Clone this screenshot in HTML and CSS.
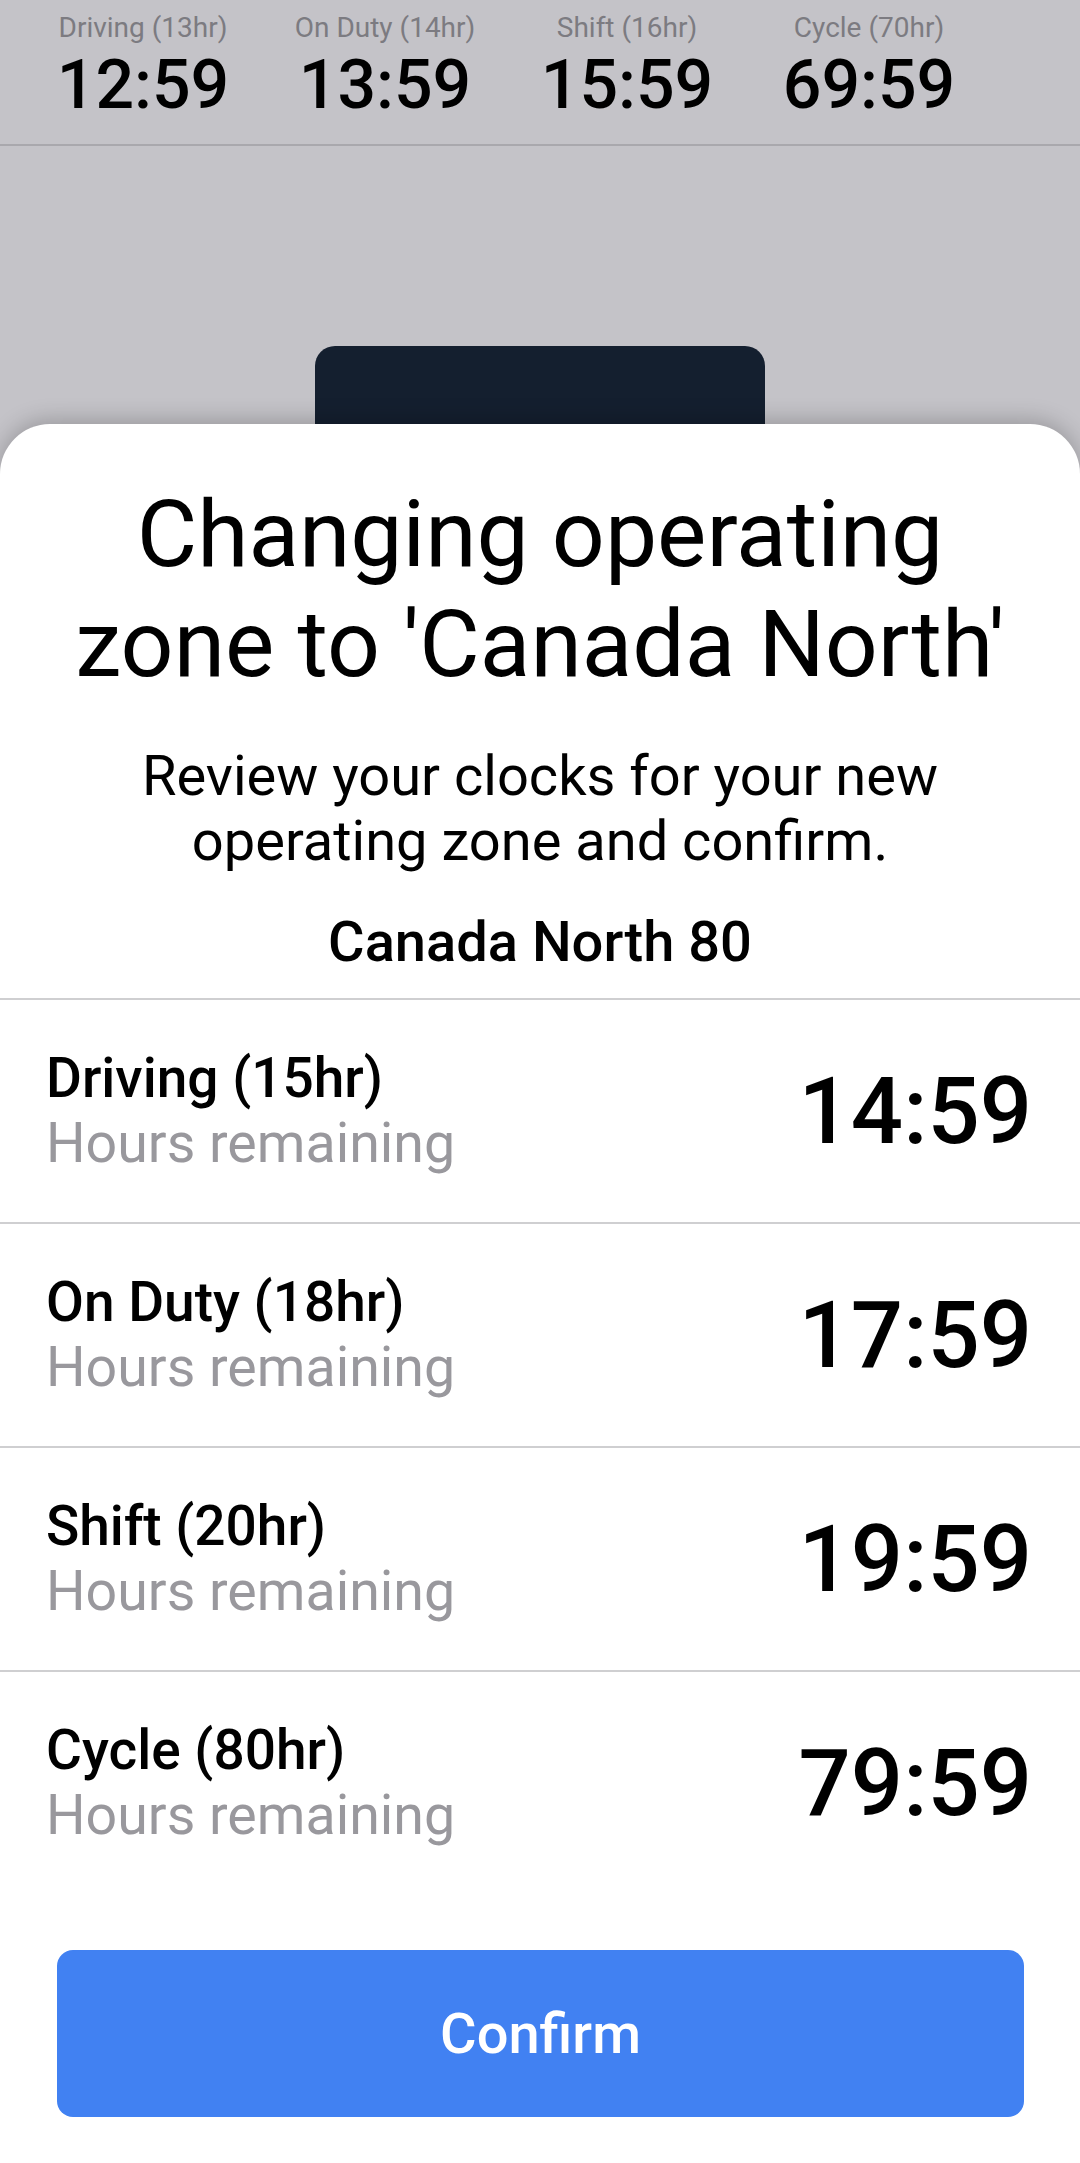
FILE: index.html
```html
<!DOCTYPE html>
<html>
<head>
<meta charset="utf-8">
<link rel="stylesheet" href="styles.css">
</head>
<body>
<div class="page">
  <header class="clocks">
    <div class="clock"><div class="clock-label">Driving (13hr)</div><div class="clock-value">12:59</div></div>
    <div class="clock"><div class="clock-label">On Duty (14hr)</div><div class="clock-value">13:59</div></div>
    <div class="clock"><div class="clock-label">Shift (16hr)</div><div class="clock-value">15:59</div></div>
    <div class="clock"><div class="clock-label">Cycle (70hr)</div><div class="clock-value">69:59</div></div>
  </header>
  <div class="behind">
    <div class="dark-btn"></div>
  </div>
</div>
<section class="sheet">
  <h1 class="title">Changing operating zone to 'Canada North'</h1>
  <p class="subtitle">Review your clocks for your new operating zone and confirm.</p>
  <div class="zone">Canada North 80</div>
  <div class="rows">
    <div class="row">
      <div class="row-text"><div class="row-label">Driving (15hr)</div><div class="row-sub">Hours remaining</div></div>
      <div class="row-value">14:59</div>
    </div>
    <div class="row">
      <div class="row-text"><div class="row-label">On Duty (18hr)</div><div class="row-sub">Hours remaining</div></div>
      <div class="row-value">17:59</div>
    </div>
    <div class="row">
      <div class="row-text"><div class="row-label">Shift (20hr)</div><div class="row-sub">Hours remaining</div></div>
      <div class="row-value">19:59</div>
    </div>
    <div class="row">
      <div class="row-text"><div class="row-label">Cycle (80hr)</div><div class="row-sub">Hours remaining</div></div>
      <div class="row-value">79:59</div>
    </div>
  </div>
  <div class="actions">
    <button class="confirm">Confirm</button>
  </div>
</section>
</body>
</html>
```

FILE: styles.css
```css
* { box-sizing: border-box; }
html, body {
  margin: 0;
  padding: 0;
  width: 1080px;
  height: 2163px;
  overflow: hidden;
  background: #c4c3c8;
  font-family: Roboto, "Noto Sans", sans-serif;
}
.page {
  height: 2163px;
}
.clocks {
  display: flex;
  padding-left: 22px;
  height: 146px;
  border-bottom: 2px solid #a9a8ad;
}
.clock {
  width: 242px;
  display: flex;
  flex-direction: column;
  align-items: center;
}
.clock-label {
  margin-top: 11px;
  font-size: 28px;
  line-height: 34px;
  color: #7c7b81;
}
.clock-value {
  font-size: 68px;
  line-height: 80px;
  font-weight: 500;
  color: #000;
}
.behind {
  display: flex;
  justify-content: center;
  padding-top: 200px;
}
.dark-btn {
  width: 450px;
  height: 160px;
  background: #141f2f;
  border-radius: 20px;
}
.sheet {
  position: absolute;
  left: 0;
  right: 0;
  top: 424px;
  bottom: 0;
  background: #fff;
  border-radius: 50px 50px 0 0;
  box-shadow: 0 -4px 22px rgba(0,0,0,0.22);
  padding-top: 56px;
  display: flex;
  flex-direction: column;
}
.title {
  margin: 0;
  text-align: center;
  font-size: 93px;
  line-height: 110px;
  font-weight: 400;
  color: #000;
  padding: 0 50px;
}
.subtitle {
  margin: 44px 0 0;
  text-align: center;
  font-size: 56px;
  line-height: 65px;
  color: #000;
  padding: 0 120px;
}
.zone {
  margin-top: 36px;
  text-align: center;
  font-size: 56px;
  line-height: 64px;
  font-weight: 500;
  color: #000;
}
.rows {
  margin-top: 24px;
}
.row {
  height: 224px;
  border-top: 2px solid #cfcfd1;
  display: flex;
  align-items: center;
  justify-content: space-between;
  padding: 0 48px 0 46px;
}
.row-label {
  font-size: 55px;
  line-height: 66px;
  font-weight: 500;
  color: #000;
}
.row-sub {
  font-size: 55.5px;
  line-height: 66px;
  color: #99989d;
}
.row-value {
  font-size: 92px;
  font-weight: 500;
  color: #000;
}
.actions {
  padding: 56px 56px 0 57px;
}
.confirm {
  width: 100%;
  height: 167px;
  border: none;
  border-radius: 16px;
  background: #4181f2;
  color: #fff;
  font-family: Roboto, "Noto Sans", sans-serif;
  font-size: 56px;
  font-weight: 500;
}
```
